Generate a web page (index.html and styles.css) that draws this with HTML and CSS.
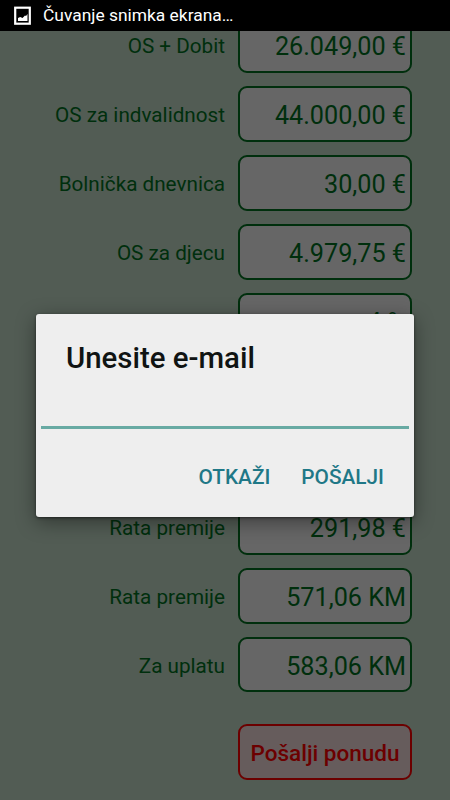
FILE: index.html
```html
<!DOCTYPE html>
<html lang="hr">
<head>
<meta charset="utf-8">
<title>Unesite e-mail</title>
<link rel="stylesheet" href="styles.css">
</head>
<body>
<div class="screen">
  <header class="status">
    <svg class="status-icon" viewBox="0 0 18 20" width="18" height="20"><rect x="1.2" y="1.7" width="14.6" height="16" fill="none" stroke="#fff" stroke-width="2.2"/><path d="M4 15V12L6.2 11L8.5 12L11 9.5L12 10L13.5 8V15Z" fill="#fff"/></svg>
    <span>Čuvanje snimka ekrana…</span>
  </header>
  <main class="form">
    <div class="row"><label>OS + Dobit</label><output>26.049,00 €</output></div>
    <div class="row"><label>OS za indvalidnost</label><output>44.000,00 €</output></div>
    <div class="row"><label>Bolnička dnevnica</label><output>30,00 €</output></div>
    <div class="row"><label>OS za djecu</label><output>4.979,75 €</output></div>
    <div class="row"><label>Doplatak</label><output>4 %</output></div>
    <div class="row"><label></label><output></output></div>
    <div class="row"><label></label><output></output></div>
    <div class="row"><label>Rata premije</label><output>291,98 €</output></div>
    <div class="row"><label>Rata premije</label><output>571,06 KM</output></div>
    <div class="row"><label>Za uplatu</label><output>583,06 KM</output></div>
    <button class="send">Pošalji ponudu</button>
  </main>
  <section class="dialog" role="dialog">
    <h1>Unesite e-mail</h1>
    <input type="email" aria-label="E-mail">
    <div class="actions"><button>OTKAŽI</button><button>POŠALJI</button></div>
  </section>
</div>
</body>
</html>
```
FILE: styles.css
```css
* { box-sizing: border-box; }
body { margin: 0; font-family: Roboto, sans-serif; }
.screen { position: relative; width: 450px; height: 800px; overflow: hidden; background: #525c54; }
.status { position: relative; z-index: 1; display: flex; align-items: center; height: 31px; padding: 0 0 2px 14px; gap: 11px; background: #000; color: #fff; font-size: 17.4px; white-space: nowrap; }
.status-icon { margin-top: 2px; }
.form { display: flex; flex-direction: column; gap: 13px; margin-top: -13.5px; padding-right: 38px; }
.row { display: grid; grid-template-columns: 225px 174px; column-gap: 13px; height: 55.8px; flex: none; align-items: center; color: #002f0d; }
.row label { text-align: right; font-size: 20.7px; white-space: nowrap; padding-top: 2px; }
.row output { display: flex; align-items: center; justify-content: flex-end; height: 100%; padding: 3px 4px 0 0; border: 2px solid #002f0d; border-radius: 9px; background: #666; font-size: 25.2px; white-space: nowrap; }
button { font-family: inherit; font-weight: 500; padding: 0; background: none; border: 0; white-space: nowrap; }
.send { align-self: flex-end; width: 174px; height: 56px; margin-top: 19px; padding-top: 2px; border: 2px solid #6c0000; border-radius: 9px; background: #665c5c; color: #6c0000; font-size: 22.5px; }
.dialog { position: absolute; left: 36px; top: 314px; width: 378px; height: 203px; padding: 25px 5px 0; border-radius: 3px; background: #eee; box-shadow: 0 5px 20px rgba(0,0,0,.4), 0 1px 3px rgba(0,0,0,.5); }
.dialog h1 { margin: 0 0 0 25px; font-size: 29.4px; line-height: 38px; font-weight: 500; color: #101413; }
.dialog input { display: block; width: 368px; height: 52px; padding: 0; border: 0; border-bottom: 3px solid #68aaa3; background: none; outline: 0; }
.actions { display: flex; justify-content: flex-end; gap: 31px; padding: 35px 25px 0 0; }
.actions button { font-size: 20.8px; line-height: 26px; color: #1f7887; }
```
